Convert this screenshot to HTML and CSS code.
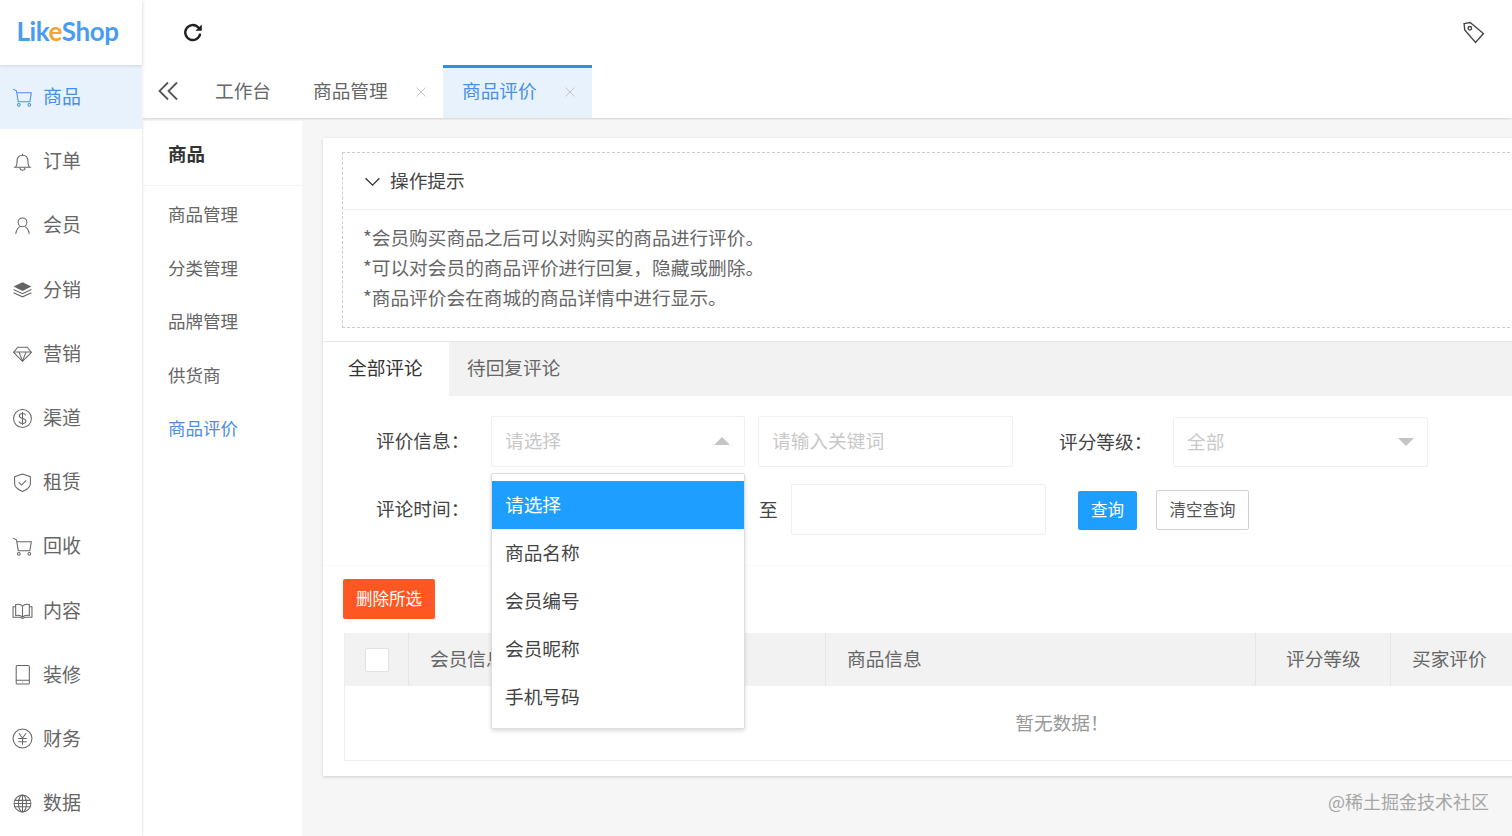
FILE: index.html
```html
<!DOCTYPE html>
<html lang="zh-CN">
<head>
<meta charset="utf-8">
<title>商品评价</title>
<link rel="stylesheet" href="styles.css">
</head>
<body>
<div class="app">
  <aside class="side">
    <div class="logo"><span class="logo-word">Lik<span class="logo-e">e</span>Shop</span></div>
    <nav class="nav">
      <a class="nav-item is-active"><svg class="nav-icon" viewBox="0 0 20 20"><path d="M1 2l3.200 1.600L6 14h11l1.400-8.600H4.600"/><circle cx="6.500" cy="17" r="1.300"/><circle cx="16.500" cy="17" r="1.300"/></svg>商品</a>
      <a class="nav-item"><svg class="nav-icon" viewBox="0 0 20 20"><path d="M3 15.500h14c-1.500-1-1.800-2.500-1.800-5.500 0-3.500-2-6-5.200-6S4.800 6.500 4.800 10c0 3-.3 4.500-1.800 5.500z"/><path d="M7.500 16c0 3 5 3 5 0M10 2.500V4"/></svg>订单</a>
      <a class="nav-item"><svg class="nav-icon" viewBox="0 0 20 20"><circle cx="10" cy="7" r="4.200"/><path d="M3.500 18c.5-4 3-6.800 4.500-7M16.500 18c-.5-4-3-6.800-4.500-7"/></svg>会员</a>
      <a class="nav-item"><svg class="nav-icon" viewBox="0 0 20 20"><path class="solid" d="M10 3l8.500 4.200L10 11.400 1.500 7.200z"/><path d="M1.500 10L10 14l8.500-4M1.500 13L10 17l8.500-4"/></svg>分销</a>
      <a class="nav-item"><svg class="nav-icon" viewBox="0 0 20 20"><path d="M5.500 4h9L18.500 9 10 17.500 1.500 9z"/><path d="M1.500 8.500h17M6.500 8.500L10 17l3.500-8.500"/></svg>营销</a>
      <a class="nav-item"><svg class="nav-icon" viewBox="0 0 20 20"><circle cx="10" cy="10" r="8.500"/><path d="M13 7c-.5-1.200-1.500-1.700-3-1.700-1.800 0-3 .9-3 2.300 0 3.300 6.200 1.500 6.200 4.800 0 1.400-1.300 2.300-3.200 2.300-1.600 0-2.800-.7-3.300-1.900M10 3.800v12.400"/></svg>渠道</a>
      <a class="nav-item"><svg class="nav-icon" viewBox="0 0 20 20"><path d="M10 2l7.500 2.500v6.500c0 3.500-3 5.800-7.500 7.500-4.500-1.700-7.500-4-7.500-7.500V4.500z"/><path d="M6.500 9.800l2.600 2.600 4.400-4.400"/></svg>租赁</a>
      <a class="nav-item"><svg class="nav-icon" viewBox="0 0 20 20"><path d="M1 2l3.200 1.600L6 14h11l1.400-8.600H4.600"/><circle cx="6.500" cy="17" r="1.300"/><circle cx="16.500" cy="17" r="1.300"/></svg>回收</a>
      <a class="nav-item"><svg class="nav-icon" viewBox="0 0 20 20"><path d="M10 6C8.500 4 6 3.800 3.500 4.300v10.500c2.500-.5 5-.2 6.500 1.500 1.500-1.700 4-2 6.500-1.500V4.300C14 3.800 11.500 4 10 6zM10 6v10"/><path d="M3.500 6.500H1V16.500h6.500l2.500 1 2.500-1H19V6.500h-2.500"/></svg>内容</a>
      <a class="nav-item"><svg class="nav-icon" viewBox="0 0 20 20"><rect x="4" y="1.500" width="12.500" height="17.500" rx="1"/><path d="M4 15.500h12.500M10 17.200h.6"/></svg>装修</a>
      <a class="nav-item"><svg class="nav-icon" viewBox="0 0 20 20"><circle cx="10" cy="10" r="9"/><path d="M6.500 5L10 9.500 13.500 5M6 10h8M6 13h8M10 9.500V16"/></svg>财务</a>
      <a class="nav-item"><svg class="nav-icon" viewBox="0 0 20 20"><circle cx="10" cy="10" r="8"/><ellipse cx="10" cy="10" rx="3.800" ry="8"/><path d="M2.500 7h15M2 10h16M2.500 13h15M10 2v16"/></svg>数据</a>
    </nav>
  </aside>

  <div class="right">
    <header class="topbar">
      <svg class="refresh" viewBox="0 0 20 20"><path d="M16.500 10.500a6.800 6.800 0 1 1-2-5.800L17 7"/><path class="solid" d="M18 2.200V8h-5.800z"/></svg>
      <svg class="tag" viewBox="0 0 22 22"><path d="M2 2.500L7.800 1.500 20.500 12 13 20.500 2.600 8.500z"/><circle cx="7.500" cy="7" r="1.700"/></svg>
    </header>
    <div class="tabs">
      <svg class="collapse" viewBox="0 0 22 20"><path d="M11 1.500L2.500 10l8.500 8.500M20 1.500L11.500 10l8.500 8.500"/></svg>
      <a class="page-tab page-tab-home">工作台</a>
      <a class="page-tab page-tab-plain">商品管理<svg class="close" viewBox="0 0 10 10"><path d="M.5 .5l9 9M9.500 .5l-9 9"/></svg></a>
      <a class="page-tab is-active">商品评价<svg class="close" viewBox="0 0 10 10"><path d="M.5 .5l9 9M9.500 .5l-9 9"/></svg></a>
    </div>
    <div class="body">
      <aside class="subnav">
        <div class="subnav-title">商品</div>
        <ul class="subnav-list">
          <li>商品管理</li>
          <li>分类管理</li>
          <li>品牌管理</li>
          <li>供货商</li>
          <li class="is-active">商品评价</li>
        </ul>
      </aside>
      <main class="content">
        <section class="card">
          <div class="hint">
            <div class="hint-head"><svg class="hint-arrow" viewBox="0 0 18 12"><path d="M1.500 2.500L9 10l7.500-7.500"/></svg>操作提示</div>
            <div class="hint-body">
              <p>*会员购买商品之后可以对购买的商品进行评价。</p>
              <p>*可以对会员的商品评价进行回复，隐藏或删除。</p>
              <p>*商品评价会在商城的商品详情中进行显示。</p>
            </div>
          </div>
          <div class="card-tabs">
            <span class="card-tab is-active">全部评论</span>
            <span class="card-tab">待回复评论</span>
          </div>
          <form class="filter">
            <div class="filter-row">
              <label class="field-label">评价信息：</label>
              <div class="select-wrap">
                <div class="control control-select">请选择<i class="caret caret-up"></i></div>
                <ul class="dropdown">
                  <li class="is-selected">请选择</li>
                  <li>商品名称</li>
                  <li>会员编号</li>
                  <li>会员昵称</li>
                  <li>手机号码</li>
                </ul>
              </div>
              <div class="control control-input">请输入关键词</div>
              <label class="field-label-grade">评分等级：</label>
              <div class="control control-select control-grade">全部<i class="caret caret-down"></i></div>
            </div>
            <div class="filter-row filter-row-date">
              <label class="field-label">评论时间：</label>
              <div class="date-start"></div>
              <span class="date-to">至</span>
              <div class="control control-date"></div>
              <button type="button" class="btn btn-primary">查询</button>
              <button type="button" class="btn btn-plain">清空查询</button>
            </div>
          </form>
          <div class="actions"><button type="button" class="btn btn-danger">删除所选</button></div>
          <div class="table">
            <div class="table-head">
              <div class="th th-check"><span class="checkbox"></span></div>
              <div class="th th-member">会员信息</div>
              <div class="th th-goods">商品信息</div>
              <div class="th th-grade">评分等级</div>
              <div class="th th-comment">买家评价</div>
            </div>
            <div class="table-empty">暂无数据！</div>
          </div>
        </section>
      </main>
    </div>
  </div>
  <div class="watermark">@稀土掘金技术社区</div>
</div>
</body>
</html>
```
FILE: styles.css
```css
* { box-sizing: border-box; }
html, body { margin: 0; height: 100%; overflow: hidden; }
body { font-family: "Noto Sans CJK SC", "Noto Sans", sans-serif; color: #666; background: #f6f6f6; }
ul { list-style: none; margin: 0; padding: 0; }
p { margin: 0; }
svg { display: block; fill: none; stroke: currentColor; stroke-width: 1; flex: none; }
svg .solid { fill: currentColor; stroke: none; }

.app { display: flex; height: 836px; overflow: hidden; position: relative; }

.side { width: 142px; flex: none; background: #fff; box-shadow: 1px 0 4px rgba(0,0,0,.06); position: relative; z-index: 2; }
.logo { height: 65px; display: flex; align-items: center; justify-content: center; padding: 0 7px 3px 0; box-shadow: 0 1px 3px rgba(0,0,0,.12); position: relative; }
.logo-word { font-family: "Lato", sans-serif; font-weight: 700; font-size: 26px; line-height: 1; letter-spacing: -.4px; color: #4a9bf2; }
.logo-e { color: #efa53a; }
.nav-item { display: flex; align-items: center; height: 64.2px; padding: 0 0 3px 12px; gap: 10px; font-size: 19px; color: #666; }
.nav-item.is-active { background: #e8f2fd; color: #4a90e2; }
.nav-icon { width: 21px; height: 21px; margin-top: 3px; }

.right { flex: 1; min-width: 0; display: flex; flex-direction: column; }
.topbar { height: 65px; flex: none; background: #fff; display: flex; align-items: center; justify-content: space-between; padding: 0 27px 0 40px; }
.refresh { width: 22px; height: 22px; color: #222; stroke-width: 2.200; }
.tag { width: 23px; height: 23px; color: #444; stroke-width: 1.300; }

.tabs { height: 53px; flex: none; background: #fff; display: flex; align-items: stretch; box-shadow: 0 2px 2px -1px rgba(0,0,0,.14); position: relative; z-index: 1; }
.collapse { width: 22px; height: 20px; color: #555; stroke-width: 1.800; margin: 16px 0 0 15px; }
.page-tab { display: flex; align-items: center; padding-bottom: 4px; font-size: 18.700px; color: #666; white-space: nowrap; }
.page-tab-home { margin-left: 36px; width: 98px; }
.page-tab-plain { width: 130px; }
.page-tab .close { width: 10px; height: 10px; margin: 4px 0 0 28px; color: #c4c4c4; }
.page-tab.is-active { width: 149px; padding: 0 0 7px 19px; background: #e8f2fd; color: #4a90e2; border-top: 3px solid #2f8fe8; }

.body { flex: 1; min-height: 0; display: flex; }
.subnav { width: 159px; flex: none; margin: 3px 0 0 1px; background: #fff; }
.subnav-title { height: 65px; padding-left: 25px; line-height: 64px; font-size: 18.500px; font-weight: 700; color: #333; border-bottom: 1px solid #f3f3f3; }
.subnav-list { padding-top: 1px; }
.subnav-list li { height: 53.500px; line-height: 53px; padding-left: 25px; font-size: 17.500px; color: #666; }
.subnav-list li.is-active { color: #4a90e2; }

.content { flex: 1; min-width: 0; padding: 20px 0 0 21px; }
.card { width: 1467px; height: 638px; padding-top: 14px; background: #fff; box-shadow: 0 1px 3px rgba(0,0,0,.16); }

.hint { margin: 0 0 13px 19px; width: 1428px; height: 176px; border: 1px dashed #ccc; }
.hint-head { height: 57px; display: flex; align-items: center; padding: 0 0 3px 21px; gap: 9px; font-size: 18.700px; color: #444; border-bottom: 1px solid #eee; }
.hint-arrow { width: 17px; height: 11px; margin-top: 3px; color: #333; stroke-width: 1.400; }
.hint-body { padding: 12px 0 0 20px; font-size: 18.700px; line-height: 30px; color: #666; }

.card-tabs { height: 55px; display: flex; background: #f2f2f2; border-top: 1px solid #e8e8e8; }
.card-tab { display: flex; align-items: center; padding: 0 0 5px 18px; font-size: 18.700px; color: #666; }
.card-tab.is-active { width: 126px; padding-left: 25px; background: #fff; color: #333; }

.filter { height: 170px; padding-top: 20px; border-bottom: 1px solid #fafafa; }
.filter-row { display: flex; align-items: center; height: 51px; }
.filter-row-date { margin-top: 17px; }
.field-label { width: 168px; padding: 0 0 4px 53px; font-size: 18.700px; color: #444; white-space: nowrap; flex: none; }
.field-label-grade { width: 160px; padding: 0 0 3px 46px; font-size: 18.700px; color: #444; white-space: nowrap; flex: none; }
.control { height: 51px; border: 1px solid #f0f0f0; border-radius: 2px; display: flex; align-items: center; padding: 0 0 4px 13px; font-size: 18.700px; color: #c8c8c8; background: #fff; position: relative; }
.select-wrap { width: 254px; flex: none; position: relative; margin-right: 13px; }
.control-input { width: 255px; flex: none; }
.control-grade { width: 255px; flex: none; height: 50px; margin-top: 1px; }
.caret { position: absolute; right: 14px; width: 0; height: 0; border: 8px solid transparent; }
.caret-up { border-bottom-color: #c4c4c4; border-top-width: 0; top: 20px; }
.caret-down { border-top-color: #c4c4c4; border-bottom-width: 0; top: 20px; }
.control-grade .caret { right: 13px; }

.dropdown { position: absolute; left: 0; top: 57px; width: 254px; height: 256px; padding: 7px 0; background: #fff; border: 1px solid #ddd; border-radius: 2px; box-shadow: 0 2px 4px rgba(0,0,0,.14); z-index: 5; }
.dropdown li { height: 48px; line-height: 45px; padding-left: 13px; font-size: 18.700px; color: #444; }
.dropdown li.is-selected { background: #1e9fff; color: #fff; }

.date-start { width: 268px; flex: none; }
.date-to { width: 32px; flex: none; padding-bottom: 3px; font-size: 18.700px; color: #444; }
.control-date { width: 255px; flex: none; }

.btn { height: 40px; padding: 0 0 2px; border-radius: 2px; font-family: inherit; font-size: 16.500px; line-height: 1; border: 1px solid transparent; flex: none; }
.btn-primary { width: 59px; height: 39px; margin: 2px 0 0 32px; background: #1e9fff; color: #fff; }
.btn-plain { width: 93px; margin: 1px 0 0 19px; background: #fff; border-color: #d2d2d2; color: #555; }
.btn-danger { display: block; width: 92px; background: #ff5722; color: #fff; }

.actions { padding: 13px 0 14px 20px; }

.table { margin-left: 21px; width: 1436px; height: 128px; border: 1px solid #eee; border-top: 0; }
.table-head { height: 53px; display: flex; background: #f2f2f2; }
.th { height: 100%; display: flex; align-items: center; padding: 0 0 4px 21px; font-size: 18.700px; color: #666; border-right: 1px solid #e6e6e6; flex: none; }
.th-check { width: 64px; padding: 0 0 0 20px; }
.th-member { width: 417px; }
.th-goods { width: 430px; }
.th-grade { width: 135px; padding-left: 30px; }
.th-comment { flex: 1; border-right: 0; }
.checkbox { width: 24px; height: 24px; background: #fff; border: 1px solid #e2e2e2; border-radius: 2px; }
.table-empty { height: 74px; display: flex; align-items: center; justify-content: center; padding-bottom: 4px; font-size: 18.700px; color: #999; }

.watermark { position: absolute; right: 23px; bottom: 23px; font-size: 18px; line-height: 24px; color: #a6a6a6; white-space: nowrap; z-index: 3; }
```
